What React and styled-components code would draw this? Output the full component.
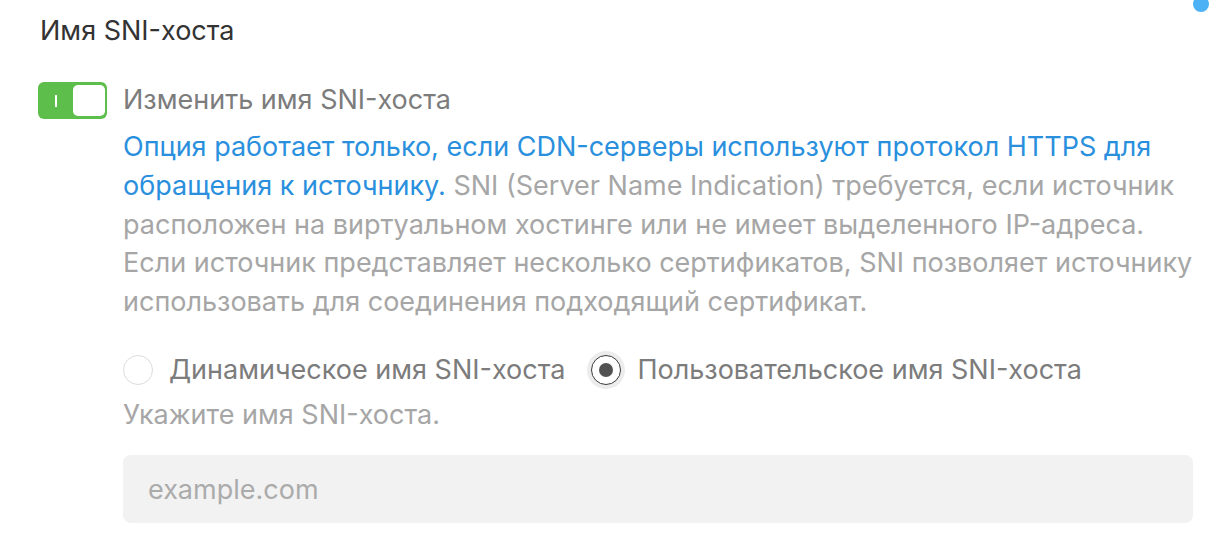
import styled, { createGlobalStyle } from 'styled-components';

const GlobalStyle = createGlobalStyle`
    html, body {
        margin: 0;
        padding: 0;
        background: #fff;
    }
    body {
        font-family: Inter, "Noto Sans", sans-serif;
        -webkit-font-smoothing: antialiased;
    }
`;

const Page = styled.div`
    position: relative;
    width: 1230px;
    height: 542px;
    overflow: hidden;
    padding: 12px 0 0 38px;
    box-sizing: border-box;
`;

const Dot = styled.span`
    position: absolute;
    top: -4px;
    left: 1193px;
    width: 16px;
    height: 16px;
    border-radius: 50%;
    background: #4cb2f5;
`;

const Title = styled.h2`
    margin: 0 0 0 2px;
    font-size: 27px;
    font-weight: 400;
    line-height: 38.4px;
    color: #333;
`;

const Section = styled.div`
    display: grid;
    grid-template-columns: 85px 1070px;
    margin-top: 31px;
`;

const Toggle = styled.button`
    display: flex;
    align-items: center;
    justify-content: space-between;
    width: 69px;
    height: 37px;
    margin-top: 1px;
    padding: 0 2px 0 17px;
    border: none;
    border-radius: 6px;
    background: #5ebe4c;
    box-sizing: border-box;
    cursor: pointer;
`;

const ToggleMark = styled.span`
    width: 2px;
    height: 12px;
    background: #fff;
`;

const Knob = styled.span`
    width: 32px;
    height: 31px;
    border-radius: 5px;
    background: #fff;
`;

const Content = styled.div`
    display: flex;
    flex-direction: column;
    font-size: 27px;
    line-height: 38.75px;
`;

const ToggleLabel = styled.div`
    color: #7c7c7c;
`;

const Description = styled.p`
    margin: 8px 0 0;
    color: #a6a6a6;
`;

const Accent = styled.span`
    color: #2a90dd;
`;

const RadioGroup = styled.div`
    display: flex;
    align-items: center;
    gap: 26px;
    margin-top: 29px;
`;

const RadioOption = styled.label`
    display: flex;
    align-items: center;
    gap: 16px;
    color: #7c7c7c;
    cursor: pointer;
`;

const RadioCircle = styled.span`
    display: flex;
    align-items: center;
    justify-content: center;
    width: 30px;
    height: 30px;
    border-radius: 50%;
    box-sizing: border-box;
    background: #fff;
    border: 1px solid ${p => (p.$checked ? '#3a3a3a' : '#dcdcdc')};
    box-shadow: ${p => (p.$checked ? '0 0 0 4px #ececec' : 'none')};

    &::after {
        content: '';
        display: ${p => (p.$checked ? 'block' : 'none')};
        width: 14px;
        height: 14px;
        border-radius: 50%;
        background: #525252;
    }
`;

const Hint = styled.div`
    margin-top: 6px;
    color: #a6a6a6;
`;

const Input = styled.input`
    margin-top: 21px;
    width: 100%;
    height: 68px;
    padding: 0 25px;
    border: none;
    border-radius: 8px;
    background: #f2f2f2;
    box-sizing: border-box;
    font-family: inherit;
    font-size: 27px;
    color: #333;
    outline: none;

    &::placeholder {
        color: #ababab;
    }
`;

export default function App() {
    return (
        <Page>
            <GlobalStyle />
            <Dot />
            <Title>Имя SNI-хоста</Title>

            <Section>
                <div>
                    <Toggle type="button" aria-pressed="true">
                        <ToggleMark />
                        <Knob />
                    </Toggle>
                </div>

                <Content>
                    <ToggleLabel>Изменить имя SNI-хоста</ToggleLabel>
                    <Description>
                        <Accent>
                            Опция работает только, если CDN-серверы используют протокол HTTPS для обращения к источнику.
                        </Accent>{' '}
                        SNI (Server Name Indication) требуется, если источник расположен на виртуальном хостинге или не имеет выделенного IP-адреса. Если источник представляет несколько сертификатов, SNI позволяет источнику использовать для соединения подходящий сертификат.
                    </Description>

                    <RadioGroup>
                        <RadioOption>
                            <RadioCircle />
                            Динамическое имя SNI-хоста
                        </RadioOption>
                        <RadioOption>
                            <RadioCircle $checked />
                            Пользовательское имя SNI-хоста
                        </RadioOption>
                    </RadioGroup>

                    <Hint>Укажите имя SNI-хоста.</Hint>

                    <Input placeholder="example.com" />
                </Content>
            </Section>
        </Page>
    );
}
